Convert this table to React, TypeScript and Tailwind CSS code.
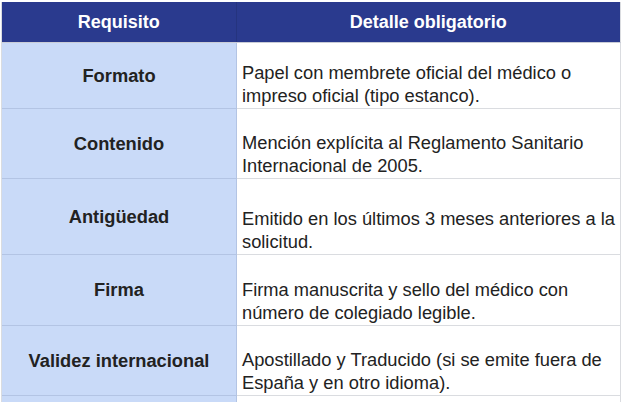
const rows = [
  {
    label: 'Formato',
    text: 'Papel con membrete oficial del médico o impreso oficial (tipo estanco).',
    h: 'h-[66px]',
  },
  {
    label: 'Contenido',
    text: 'Mención explícita al Reglamento Sanitario Internacional de 2005.',
    h: 'h-[70px]',
  },
  {
    label: 'Antigüedad',
    text: 'Emitido en los últimos 3 meses anteriores a la solicitud.',
    h: 'h-[76px]',
  },
  {
    label: 'Firma',
    text: 'Firma manuscrita y sello del médico con número de colegiado legible.',
    h: 'h-[71px]',
  },
  {
    label: 'Validez internacional',
    text: 'Apostillado y Traducido (si se emite fuera de España y en otro idioma).',
    h: 'h-[70px]',
  },
];

export default function App() {
  return (
    <div
      className="w-[621px] h-[402px] overflow-hidden bg-white pl-px pt-[2px]"
      style={{ fontFamily: '"Liberation Sans", Arial, sans-serif' }}
    >
      <div className="w-[620px] border-l border-[#dadce0]">
        {/* header */}
        <div className="flex h-[41px] border-b border-[#c9ccd6]">
          <div className="w-[235px] bg-[#2a3a8e] border-r border-[#25347f] flex items-center justify-center text-white font-bold text-[18px]">
            Requisito
          </div>
          <div className="w-[384px] bg-[#2a3a8e] flex items-center justify-center text-white font-bold text-[18px]">
            Detalle obligatorio
          </div>
          <div className="w-px bg-[#dadce0]" />
        </div>

        {rows.map((r) => (
          <div key={r.label} className={`flex ${r.h}`}>
            <div className="w-[235px] bg-[#c9daf8] border-r border-b border-[#b3c4e4] flex items-center justify-center font-bold text-[18.3px] text-[#222]">
              {r.label}
            </div>
            <div className="w-[384px] border-b border-r border-[#dadce0] flex items-end pl-[5px] pr-1 pb-[1px] text-[18.3px] leading-[23px] text-[#222]">
              <p>{r.text}</p>
            </div>
          </div>
        ))}

        <div className="flex h-[10px]">
          <div className="w-[235px] bg-[#c9daf8] border-r border-[#b3c4e4]" />
          <div className="w-[384px] border-r border-[#dadce0]" />
        </div>
      </div>
    </div>
  );
}
